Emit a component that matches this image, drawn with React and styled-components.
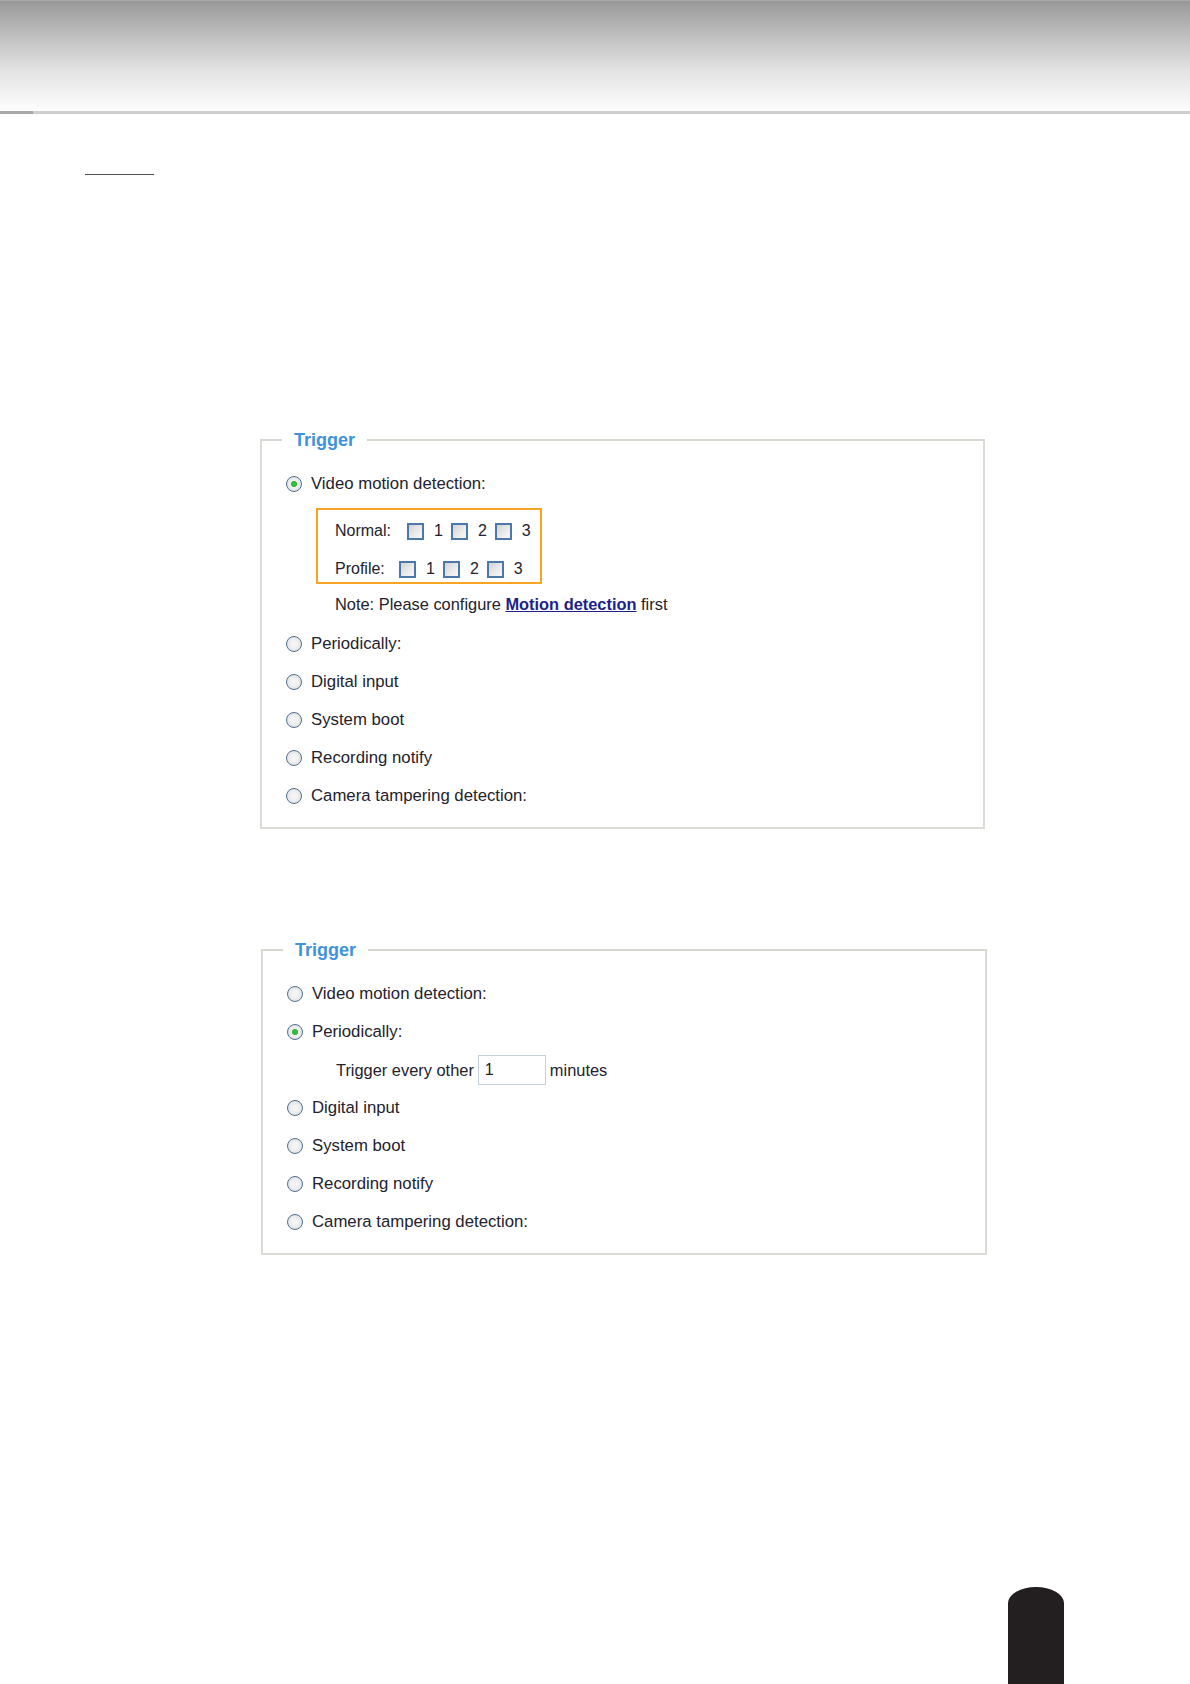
import React from 'react'
import styled, { createGlobalStyle } from 'styled-components'

const GlobalStyle = createGlobalStyle`
    html, body {
        margin: 0;
        padding: 0;
        background: #ffffff;
    }
    body {
        font-family: "Liberation Sans", Arial, sans-serif;
        color: #23222e;
    }
`

function Radio({ checked }) {
    return <RadioDot checked={checked} />
}

function Check() {
    return <CheckBox />
}

function CheckGroup({ label, labelWidth }) {
    return (
        <BoxRow>
            <BoxLabel width={labelWidth}>{label}</BoxLabel>
            {[1, 2, 3].map(n => (
                <CheckItem key={n}>
                    <Check />
                    <span>{n}</span>
                </CheckItem>
            ))}
        </BoxRow>
    )
}

function OptionRow({ checked, children }) {
    return (
        <Row>
            <Radio checked={checked} />
            <span>{children}</span>
        </Row>
    )
}

function App() {
    return (
        <Page>
            <GlobalStyle />
            <Header>
                <HeaderEdge />
            </Header>
            <Rule />
            <Main>
                <Panel width={725} left={260}>
                    <Legend>Trigger</Legend>
                    <OptionRow checked>Video motion detection:</OptionRow>
                    <HighlightBox>
                        <CheckGroup label="Normal:" labelWidth={72} />
                        <CheckGroup label="Profile:" labelWidth={64} />
                    </HighlightBox>
                    <Note>
                        Note: Please configure <NoteLink href="#">Motion detection</NoteLink> first
                    </Note>
                    <OptionRow>Periodically:</OptionRow>
                    <OptionRow>Digital input</OptionRow>
                    <OptionRow>System boot</OptionRow>
                    <OptionRow>Recording notify</OptionRow>
                    <OptionRow>Camera tampering detection:</OptionRow>
                </Panel>

                <Panel width={726} left={261}>
                    <Legend>Trigger</Legend>
                    <OptionRow>Video motion detection:</OptionRow>
                    <OptionRow checked>Periodically:</OptionRow>
                    <SubRow>
                        <span>Trigger every other</span>
                        <NumberInput defaultValue="1" />
                        <span>minutes</span>
                    </SubRow>
                    <OptionRow>Digital input</OptionRow>
                    <OptionRow>System boot</OptionRow>
                    <OptionRow>Recording notify</OptionRow>
                    <OptionRow>Camera tampering detection:</OptionRow>
                </Panel>
            </Main>
            <PageTab />
        </Page>
    )
}

export default App

const Page = styled.div`
    position: relative;
    width: 1190px;
    height: 1684px;
    overflow: hidden;
`

const Header = styled.header`
    position: relative;
    height: 110px;
    border-top: 1px solid #a8a8a8;
    border-bottom: 3px solid #cfcfcf;
    background: linear-gradient(to bottom, #989898 0%, #bdbdbd 30%, #e2e2e2 62%, #fafafa 95%, #fdfdfd 100%);
`

const HeaderEdge = styled.div`
    position: absolute;
    left: 0;
    bottom: -3px;
    width: 33px;
    height: 3px;
    background: #a9a9a9;
`

const Rule = styled.div`
    width: 69px;
    margin: 60px 0 0 85px;
    border-top: 1px solid #4e4e4e;
`

const Main = styled.main`
    display: flex;
    flex-direction: column;
    gap: 111px;
    padding-top: 255px;
`

const Panel = styled.fieldset`
    box-sizing: border-box;
    width: ${p => p.width}px;
    margin: 0 0 0 ${p => p.left}px;
    padding: 15px 0 12px 24px;
    border: 2px solid #dcdcd6;
    border-top-color: #d7d7d0;
    display: flex;
    flex-direction: column;
    min-width: 0;
`

const Legend = styled.legend`
    margin-left: -4px;
    padding: 0 12px;
    font-size: 18px;
    line-height: 20px;
    font-weight: bold;
    color: #3d93dc;
`

const Row = styled.div`
    display: flex;
    align-items: center;
    height: 38px;
    gap: 9px;
    font-size: 16.75px;
`

const RadioDot = styled.span`
    box-sizing: border-box;
    width: 16px;
    height: 16px;
    border-radius: 50%;
    border: 1px solid #52708e;
    background: radial-gradient(circle at 50% 50%, ${p => p.checked ? '#2fbf3a 0, #2fbf3a 2.6px, #b9d4bb 3.4px,' : ''} #f6f6f6 0, #f2f2f2 35%, #d3d9df 100%);
    flex-shrink: 0;
`

const HighlightBox = styled.div`
    box-sizing: border-box;
    width: 226px;
    margin: 5px 0 0 30px;
    padding: 10px 0 2px 17px;
    border: 2px solid #f6a623;
    display: flex;
    flex-direction: column;
    gap: 16px;
`

const BoxRow = styled.div`
    display: flex;
    align-items: center;
    height: 22px;
    font-size: 16px;
`

const BoxLabel = styled.span`
    width: ${p => p.width}px;
`

const CheckItem = styled.span`
    display: flex;
    align-items: center;
    gap: 10px;
    margin-right: 8px;
`

const CheckBox = styled.span`
    box-sizing: border-box;
    width: 17px;
    height: 17px;
    border: 2px solid #4b78a8;
    background: linear-gradient(135deg, #d2d2d2 0%, #ececec 60%, #f8f8f8 100%);
`

const Note = styled.div`
    height: 22px;
    line-height: 22px;
    margin: 9px 0 10px 49px;
    font-size: 16.4px;
`

const NoteLink = styled.a`
    color: #1d1f8c;
    font-weight: bold;
    text-decoration: underline;
`

const SubRow = styled.div`
    display: flex;
    align-items: center;
    height: 38px;
    padding-left: 49px;
    font-size: 16.4px;
    gap: 3px;
`

const NumberInput = styled.input`
    box-sizing: border-box;
    width: 68px;
    height: 30px;
    margin: 0 1px;
    padding: 0 6px;
    border: 1px solid #c4d0dc;
    font-family: "Liberation Sans", Arial, sans-serif;
    font-size: 16px;
    color: #23222e;
    outline: none;
`

const PageTab = styled.div`
    position: absolute;
    left: 1008px;
    top: 1587px;
    width: 56px;
    height: 97px;
    background: #231f20;
    border-radius: 28px 28px 0 0 / 16px 16px 0 0;
`
